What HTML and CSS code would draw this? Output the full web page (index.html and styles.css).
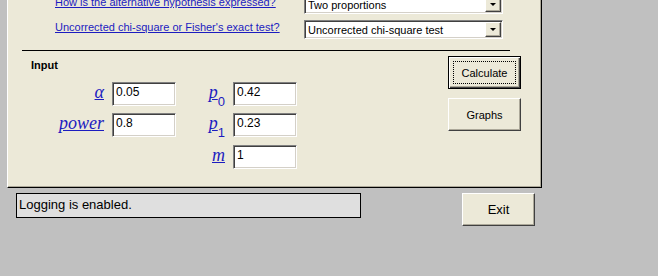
FILE: index.html
```html
<!DOCTYPE html>
<html lang="en">
<head>
    <meta charset="UTF-8">
    <meta name="viewport" content="width=device-width, initial-scale=1.0">
    <title>Sample Size - Two Proportions</title>
    <link rel="stylesheet" href="styles.css">
</head>
<body>
    <div class="panel">
        <div class="questions">
            <a class="question" href="#">How is the alternative hypothesis expressed?</a>
            <div class="combo"><span class="combo-text">Two proportions</span><span class="drop"></span></div>
            <a class="question" href="#">Uncorrected chi-square or Fisher's exact test?</a>
            <div class="combo"><span class="combo-text">Uncorrected chi-square test</span><span class="drop"></span></div>
        </div>

        <div class="rule"></div>

        <div class="lower">
            <div class="input-group">
                <div class="group-title">Input</div>
                <div class="fields">
                    <a class="sym" href="#">&alpha;</a>
                    <div class="field">0.05</div>
                    <a class="sym" href="#">p<span class="sub">0</span></a>
                    <div class="field">0.42</div>

                    <a class="sym" href="#">power</a>
                    <div class="field">0.8</div>
                    <a class="sym" href="#">p<span class="sub">1</span></a>
                    <div class="field">0.23</div>

                    <span></span>
                    <span></span>
                    <a class="sym sym-m" href="#">m</a>
                    <div class="field field-m">1</div>
                </div>
            </div>
            <div class="actions">
                <button class="btn btn-default"><span class="focus">Calculate</span></button>
                <button class="btn">Graphs</button>
            </div>
        </div>
    </div>

    <div class="footer">
        <div class="status">Logging is enabled.</div>
        <button class="btn btn-exit">Exit</button>
    </div>
</body>
</html>
```

FILE: styles.css
```css
body {
    margin: 0;
    background-color: #c0c0c0;
    font-family: "Liberation Sans", Arial, sans-serif;
    font-size: 11px;
    color: #000;
    overflow: hidden;
}

/* main dialog panel, top part scrolled off */
.panel {
    box-sizing: border-box;
    margin: -12px 0 0 7px;
    width: 535px;
    height: 200px;
    background-color: #ece9d8;
    border: 1px solid;
    border-color: #fff #000 #000 #fff;
    box-shadow: inset -1px -1px 0 #aca899;
}

.questions {
    display: grid;
    grid-template-columns: 249px 199px;
    grid-auto-rows: 19px;
    row-gap: 6px;
    padding: 6px 0 0 47px;
}
.question {
    color: #1c1cc0;
    font-size: 11px;
    line-height: 13px;
    margin-top: 1px;
}

.combo {
    box-sizing: border-box;
    display: flex;
    align-items: center;
    background-color: #fff;
    border: 1px solid;
    border-color: #808080 #fff #fff #808080;
    box-shadow: inset 1px 1px 0 #404040, inset -1px -1px 0 #d4d0c8;
    padding: 1px 1px 1px 3px;
}
.combo-text {
    flex: 1;
    font-size: 11px;
}
.drop {
    position: relative;
    box-sizing: border-box;
    width: 16px;
    height: 15px;
    background-color: #ece9d8;
    border: 1px solid;
    border-color: #fff #404040 #404040 #fff;
    box-shadow: inset -1px -1px 0 #aca899;
}
.drop::after {
    content: "";
    position: absolute;
    left: 4px;
    top: 5px;
    border-left: 3px solid transparent;
    border-right: 3px solid transparent;
    border-top: 3px solid #000;
}

.rule {
    margin: 11px 0 0 14px;
    width: 488px;
    height: 1px;
    background-color: #000;
}

.lower {
    display: flex;
}
.input-group {
    width: 417px;
    padding: 8px 0 0 23px;
}
.group-title {
    font-weight: bold;
    line-height: 13px;
}

.fields {
    display: grid;
    grid-template-columns: 73px 64px 41px 64px;
    grid-template-rows: 24px 24px 24px;
    column-gap: 8px;
    row-gap: 7px;
    margin-top: 10px;
}
.sym {
    justify-self: end;
    align-self: start;
    color: #1c1cc0;
    font-family: "Liberation Serif", "Times New Roman", serif;
    font-style: italic;
    font-size: 18px;
    line-height: 20px;
    margin-top: 0;
}
.sym .sub {
    display: inline-block;
    font-family: "Liberation Sans", Arial, sans-serif;
    font-style: normal;
    font-size: 13px;
    vertical-align: -8px;
    margin-left: 0;
}
.sym-m,
.field-m {
    margin-top: 1px;
}
.field {
    box-sizing: border-box;
    height: 24px;
    background-color: #fff;
    border: 1px solid;
    border-color: #808080 #fff #fff #808080;
    box-shadow: inset 1px 1px 0 #404040, inset -1px -1px 0 #d4d0c8;
    padding: 2px 3px;
    font-size: 12px;
    line-height: 14px;
}

.actions {
    display: flex;
    flex-direction: column;
    gap: 9px;
    padding-top: 5px;
}

.btn {
    box-sizing: border-box;
    width: 73px;
    height: 33px;
    background-color: #ece9d8;
    border: 1px solid;
    border-color: #fff #404040 #404040 #fff;
    box-shadow: inset -1px -1px 0 #aca899;
    font-family: "Liberation Sans", Arial, sans-serif;
    font-size: 11px;
    color: #000;
    padding: 0;
}
.btn-default {
    border: 1px solid #000;
    box-shadow: inset 1px 1px 0 #fff, inset -1px -1px 0 #404040, inset -2px -2px 0 #aca899;
    padding: 4px;
}
.btn-default .focus {
    display: flex;
    align-items: center;
    justify-content: center;
    height: 100%;
    border: 1px dotted #000;
    box-sizing: border-box;
}

.footer {
    display: flex;
    align-items: flex-start;
    margin-top: 5px;
}
.status {
    box-sizing: border-box;
    margin-left: 16px;
    width: 345px;
    height: 25px;
    background-color: #dfdfdf;
    border: 1px solid #000;
    padding: 3px 2px;
    font-size: 13px;
    line-height: 16px;
}
.btn-exit {
    margin-left: 101px;
    font-size: 13px;
}
```
